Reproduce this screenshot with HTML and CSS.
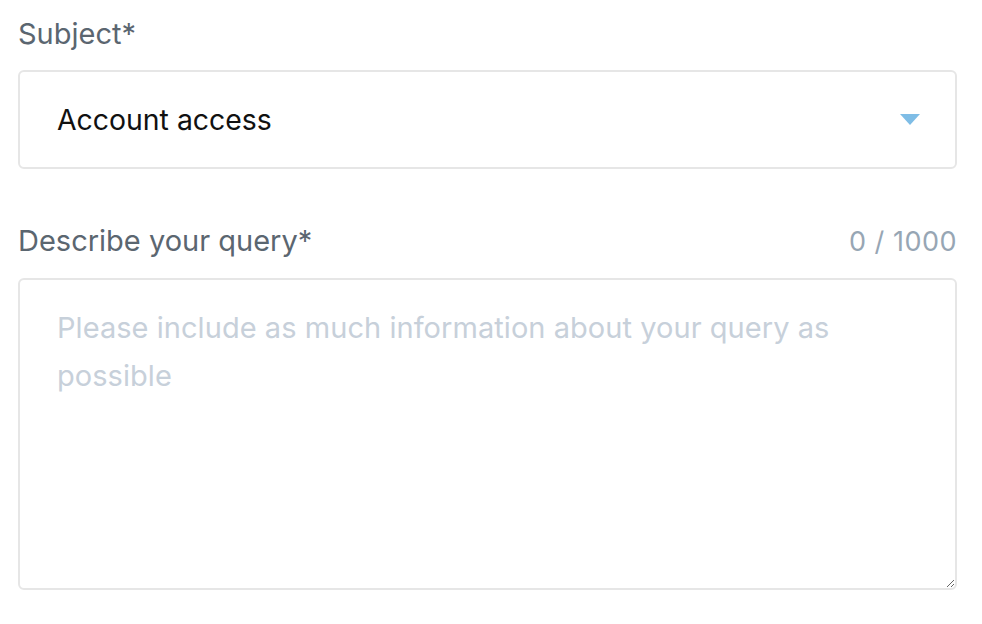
FILE: index.html
```html
<!DOCTYPE html>
<html>
<head>
<meta charset="utf-8">
<link rel="stylesheet" href="styles.css">
</head>
<body>
<form class="form">
  <div class="field">
    <label class="label" for="subject">Subject*</label>
    <div class="select">
      <span class="select-value">Account access</span>
      <svg class="caret" width="20" height="11" viewBox="0 0 20 11"><path d="M0 0H20L10 11Z" fill="#7fbde6"/></svg>
    </div>
  </div>
  <div class="field field-query">
    <div class="label-row">
      <label class="label" for="query">Describe your query*</label>
      <span class="counter">0 / 1000</span>
    </div>
    <textarea id="query" class="textarea" placeholder="Please include as much information about your query as possible"></textarea>
  </div>
</form>
</body>
</html>
```

FILE: styles.css
```css
html, body {
  margin: 0;
  padding: 0;
  background: #ffffff;
}
.form {
  width: 939px;
  padding: 14px 0 0 18px;
  font-family: Inter, "Noto Sans", sans-serif;
}
.field {
  display: flex;
  flex-direction: column;
}
.label {
  font-size: 29px;
  line-height: 40px;
  color: #5b6670;
  margin-bottom: 16px;
}
.select {
  box-sizing: border-box;
  height: 99px;
  border: 2px solid #e6e6e6;
  border-radius: 6px;
  display: flex;
  align-items: center;
  justify-content: space-between;
  padding: 0 35px 0 37px;
}
.select-value {
  font-size: 28.4px;
  color: #111111;
}
.caret {
  display: block;
}
.field-query {
  margin-top: 52px;
}
.field-query .label {
  margin-bottom: 17px;
}
.label-row {
  display: flex;
  justify-content: space-between;
  align-items: baseline;
}
.counter {
  font-size: 27px;
  letter-spacing: 0.5px;
  color: #97a6b4;
}
.textarea {
  box-sizing: border-box;
  width: 939px;
  height: 312px;
  border: 2px solid #e6e6e6;
  border-radius: 6px;
  padding: 24px 37px;
  font-family: Inter, "Noto Sans", sans-serif;
  font-size: 29px;
  line-height: 48px;
  letter-spacing: 0.05px;
  color: #111;
  margin: 0;
  outline: none;
}
.textarea::placeholder {
  color: #c7d0da;
}
```
